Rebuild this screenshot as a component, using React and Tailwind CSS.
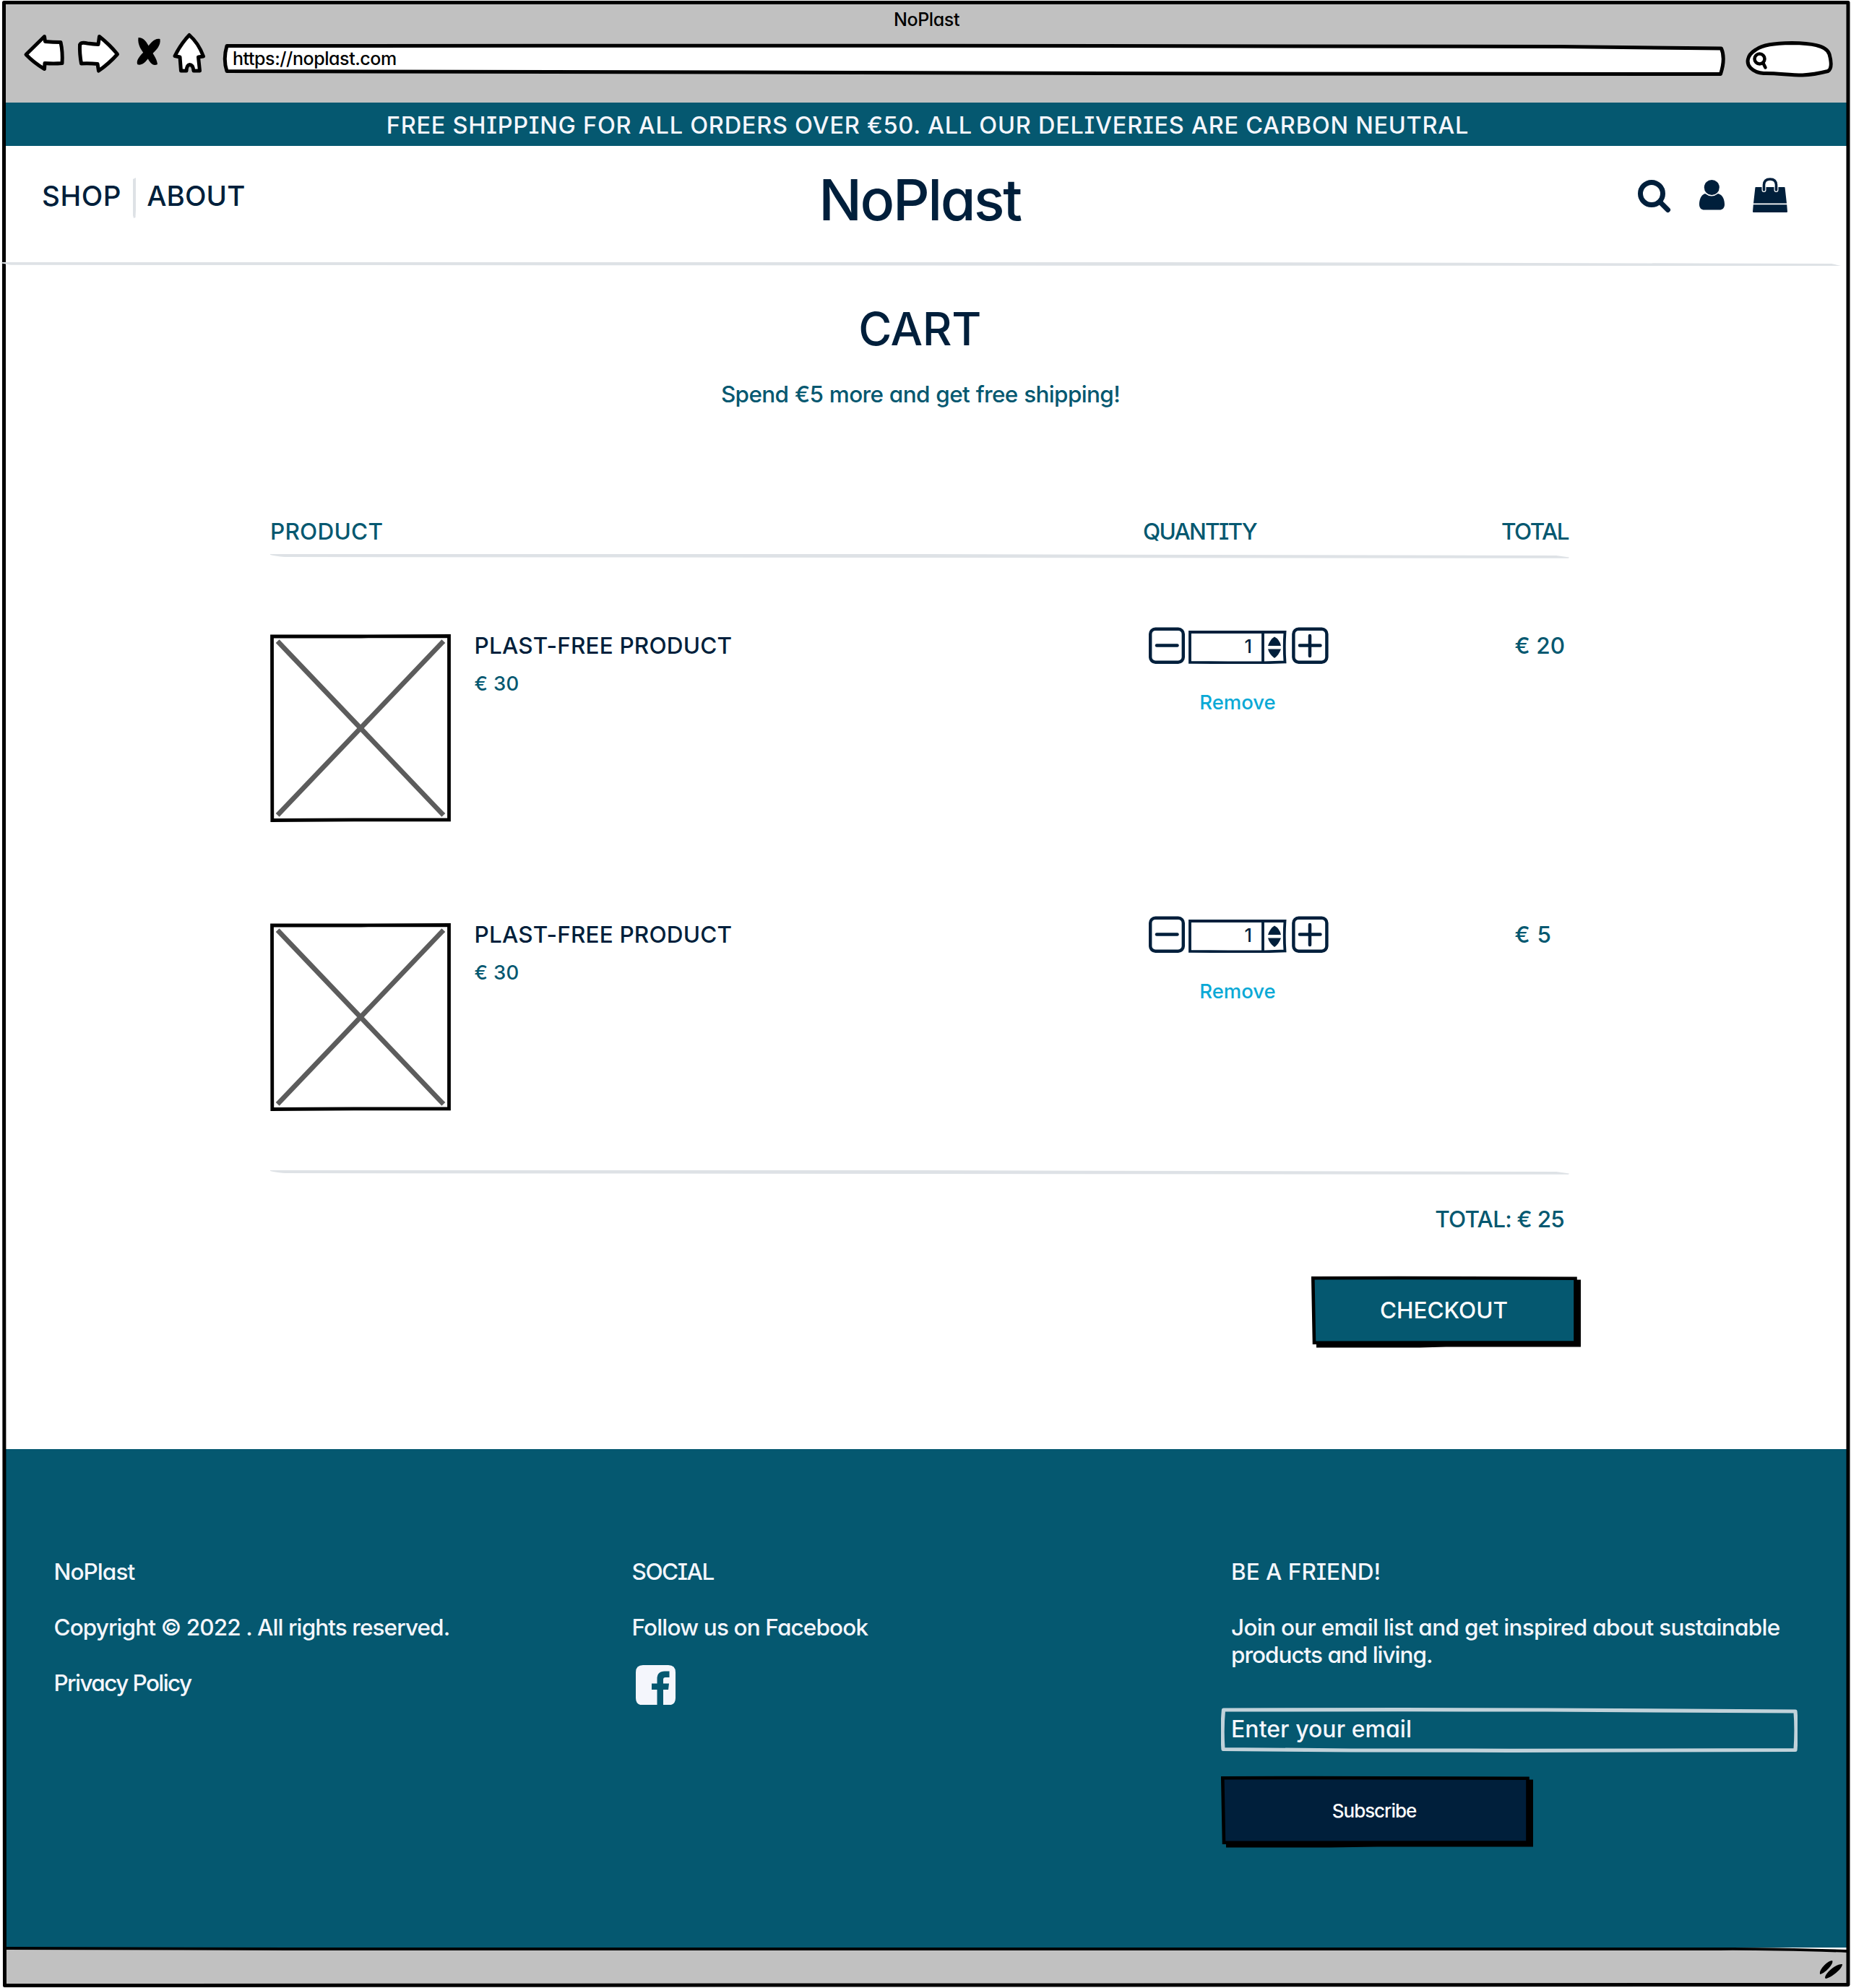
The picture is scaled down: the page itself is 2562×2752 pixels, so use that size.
import React from "react";

const NAVY = "#001f3b";

function T({ className = "", children }) {
  return <span className={"inline-block whitespace-nowrap " + className}>{children}</span>;
}

function Sketch({ box, w, h, className = "", children }) {
  return (
    <svg viewBox={box} width={w} height={h} preserveAspectRatio="none" className={"block shrink-0 " + className}>
      {children}
    </svg>
  );
}

const outline = { fill: "#fff", stroke: "#000", strokeWidth: 5, strokeLinejoin: "round", strokeLinecap: "round" };

function Toolbar() {
  return (
    <div className="h-[142px] bg-[#c1c1c1]">
      <div className="h-[40px] pt-[14px] pl-[3px] text-center text-[25px] leading-[27px] text-black">
        <T className="tracking-[-0.38px]">NoPlast</T>
      </div>
      <div className="flex h-[70px] pl-[30px]">
        <Sketch box="30 40 64 70" w={64} h={70}>
          <path {...outline} d="M61.5 50.5 L36 75.5 Q47 87 61.5 95.5 L62 87.5 Q74 88.5 86 87.5 Q87 72 84 58.5 Q73 58.5 62.5 57.5 Z" />
        </Sketch>
        <Sketch box="104 40 64 70" w={64} h={70} className="ml-[10px]">
          <path {...outline} d="M137.5 50.5 Q152 62 162.5 75 Q151 88 136.5 98 L135 88.5 Q124 87.5 112.5 88 Q110 74 110.5 62 Q112 58 121 60 Q129 61 136 61.5 Z" />
        </Sketch>
        <Sketch box="184 40 44 70" w={44} h={70} className="ml-[16px]">
          <path d="M191.5 52 C199 52 203 58 207 66 C211 74 217 80 218 89 C212 92 208 88 203 78 C196 71 190 62 191.5 52Z" fill="#000" />
          <path d="M221.5 54 C214 52 208 60 203 67 C197 75 188 81 190 89 C197 92 203 84 209 76 C216 70 223 63 221.5 54Z" fill="#000" />
        </Sketch>
        <Sketch box="236 40 52 70" w={52} h={70} className="ml-[8px]">
          <path {...outline} d="M262 48.5 Q275 60 281.5 78 L274.5 79 L276.5 98 L268 98 Q267 89.5 262.5 89.5 Q258.5 90 258 98 L250.5 98 L249 79 L242 77.5 Q250 61 262 48.5 Z" />
        </Sketch>
        <div className="relative ml-[18px] h-[70px] w-[2084px]">
          <Sketch box="306 40 2084 70" w={2084} h={70} className="absolute inset-0">
            <path {...outline} d="M314 63.5 L1300 63.2 L2160 64.5 L2382.5 67 Q2388.5 81 2381.5 102.5 L1640 101.8 L1000 100 L314 98.5 Q308.5 82 314 63.5 Z" />
          </Sketch>
          <div className="relative pt-[24px] pl-[16px] text-[25px] leading-[34px] text-black">
            <T className="tracking-[-0.43px]">https://noplast.com</T>
          </div>
        </div>
        <Sketch box="2414 40 126 70" w={126} h={70} className="ml-[24px]">
          <path {...outline} d="M2441 101.5 C2460 101 2475 104 2495 104 C2508 103.5 2520 101 2530 98.5 C2536 95 2534.5 84 2532 75 C2528 62 2505 60 2480 59.5 C2455 60 2440 62 2430 69 C2417 77 2417 88 2423 94 C2428 99 2433 101 2441 101.5 Z" />
          <circle cx="2435.5" cy="81.5" r="7" fill="none" stroke="#000" strokeWidth="4.5" />
          <path d="M2440.5 87.5 L2443.5 93.5" stroke="#000" strokeWidth="4.5" strokeLinecap="round" />
        </Sketch>
      </div>
    </div>
  );
}

function Header() {
  return (
    <div className="h-[161px] pl-[58px] pr-[88px]">
      <div className="grid h-[138px] grid-cols-[900px_1fr_900px] items-center text-[#001f3b]">
        <div className="flex items-center text-[38.5px] leading-[48px]">
          <T className="tracking-[0.6px]">SHOP</T>
          <Sketch box="184 246 4 56" w={4} h={56} className="mt-[6px] ml-[16px] mr-[15px]">
            <path d="M184 248 L188 246 L188 290 L187.5 301 L185 302 L184 298 Z" fill="#dee2e6" />
          </Sketch>
          <T className="tracking-[0.1px]">ABOUT</T>
        </div>
        <div className="pt-[10px] pl-[14px] text-center text-[79px] leading-[96px]">
          <T className="tracking-[-2.41px]">NoPlast</T>
        </div>
        <div className="flex justify-end">
          <Sketch box="2267 247 46 49" w={46} h={49}>
            <circle cx="2286" cy="268" r="15.5" fill="none" stroke={NAVY} strokeWidth="7" />
            <path d="M2298 280 L2308.5 290.5" stroke={NAVY} strokeWidth="7" strokeLinecap="round" />
          </Sketch>
          <Sketch box="2352 247 35 49" w={35} h={49} className="ml-[39px]">
            <path d="M2360 268 Q2369 275 2378 268 C2385 270 2387 277 2387 283 C2387 288 2384 290.5 2380 290.5 H2359 C2355 290.5 2352 288 2352 283 C2352 277 2354 270 2360 268Z" fill={NAVY} />
            <circle cx="2369.3" cy="259.5" r="10.5" fill={NAVY} />
          </Sketch>
          <Sketch box="2426 246 48 49" w={48} h={49} className="ml-[39px] -mt-[1px]">
            <path d="M2430 259 H2470 Q2470.5 259 2470.6 260 L2473 281.5 H2427 L2429.4 260 Q2429.5 259 2430 259Z M2426.8 283.2 H2473.2 L2474 293 Q2474 294 2473 294 H2427 Q2426 294 2426 293Z" fill={NAVY} />
            <path d="M2441.5 263 V256.5 Q2441.5 248 2450 248 Q2458.5 248 2458.5 256.5 V263" fill="none" stroke="#fff" strokeWidth="6" strokeLinecap="round" />
            <path d="M2441.5 263 V256.5 Q2441.5 248 2450 248 Q2458.5 248 2458.5 256.5 V263" fill="none" stroke={NAVY} strokeWidth="3.6" strokeLinecap="round" />
          </Sketch>
        </div>
      </div>
    </div>
  );
}

function Rule({ className = "" }) {
  return (
    <Sketch box="0 0 1798 8" w={1798} h={8} className={className}>
      <path d="M0 2 L900 2 L1300 3 L1780 4 L1798 6.5 L1797 7.8 L1200 7.2 L500 6.6 L20 6 Q8 5 0 3Z" fill="#dee2e6" />
    </Sketch>
  );
}

function Stepper() {
  return (
    <div className="flex w-[249px] justify-between">
      <Sketch box="1590 868 50 51" w={50} h={51}>
        <rect x="1592.2" y="870.7" width="45.6" height="46" rx="7" fill="none" stroke={NAVY} strokeWidth="4.4" />
        <path d="M1601 893.5 H1629.5" stroke={NAVY} strokeWidth="4.5" strokeLinecap="round" />
      </Sketch>
      <div className="relative -ml-[2px] h-[51px] w-[136px]">
        <Sketch box="1645 868 136 51" w={136} h={51} className="absolute inset-0">
          <path d="M1647 875 H1778.5 Q1777 895 1778.5 916.5 L1750 917.3 L1700 917.3 L1647 916.8 Z M1748 875 V917" fill="none" stroke={NAVY} strokeWidth="3.8" />
          <path d="M1764 881.5 Q1771 885 1773 894 H1755 Q1758 885 1764 881.5Z M1755 898.5 H1773 Q1770 907 1764 911 Q1757 906 1755 898.5Z" fill={NAVY} />
        </Sketch>
        <div className="relative pt-[10px] pr-[48px] text-right text-[25px] leading-[34px] text-[#001f3b]">1</div>
      </div>
      <Sketch box="1788 868 51 51" w={51} h={51}>
        <rect x="1790.4" y="870.7" width="46" height="46" rx="7" fill="none" stroke={NAVY} strokeWidth="4.4" />
        <path d="M1799 893.5 H1827.5 M1813 880 V908" stroke={NAVY} strokeWidth="4.5" strokeLinecap="round" />
      </Sketch>
    </div>
  );
}

function CartRow({ children }) {
  return (
    <div className="grid h-[400px] grid-cols-[284px_932px_487px_95px] pt-[95px]">
      <Sketch box="374 878 251 261" w={251} h={261} className="mt-[10px]">
        <path d="M386.5 890 L611.5 1126 M611.5 890 L386.5 1126" stroke="#5c5c5c" strokeWidth="6.8" strokeLinecap="square" />
        <path d="M376.5 881 L500 881 L621.5 880.5 L621.5 1134.8 L490 1134.8 L376.8 1135.5 Z" fill="none" stroke="#000" strokeWidth="4.8" />
      </Sketch>
      <div className="pt-[6.5px]">
        <div className="-ml-[1.5px] text-[31.5px] leading-[38px] text-[#001f3b]"><T className="tracking-[0.18px]">PLAST-FREE PRODUCT</T></div>
        <div className="mt-[16.5px] -ml-[1.5px] text-[27.5px] leading-[34px] text-[#055870]"><T className="tracking-[0.3px]">€ 30</T></div>
      </div>
      <div>
        <Stepper />
        <div className="mt-[36px] w-[246px] text-center text-[27.5px] leading-[34px] text-[#0aa9d6]"><T>Remove</T></div>
      </div>
      <div className="pt-[6.5px] pl-[19.5px] text-[31.5px] leading-[38px] text-[#055870]">{children}</div>
    </div>
  );
}

function SketchButton({ width, fill, className, children }) {
  return (
    <button className={"relative flex h-[100px] items-center justify-center " + className} style={{ width }}>
      <Sketch box={`0 0 ${width} 100`} w={width} h={100} className="absolute inset-0">
        <path d={`M6 5.5 H${width} V98.5 L${width / 2} 98.5 L150 99.5 H7 Z`} fill="#000" />
        <path d={`M2.3 3.2 L120 3 L${width - 7.5} 3.7 V92.5 L4 92.8 Z`} fill={fill} stroke="#000" strokeWidth="4.6" />
      </Sketch>
      <span className="relative">{children}</span>
    </button>
  );
}

function Main() {
  return (
    <main className="ml-[374px] h-[1638px] w-[1798px]">
      <h1 className="pt-[55px] text-center text-[63px] leading-[64px] text-[#001f3b]"><T className="tracking-[-0.44px]">CART</T></h1>
      <p className="mt-[39.5px] pl-[2px] text-center text-[31.5px] leading-[38px] text-[#055870]">
        <T className="tracking-[-0.65px] [word-spacing:0.8px]">Spend €5 more and get free shipping!</T>
      </p>
      <div className="mt-[152px] grid grid-cols-[1208px_496px_94px] text-[31.5px] leading-[38px] text-[#055870]">
        <div><T className="tracking-[0.25px]">PRODUCT</T></div>
        <div><T className="tracking-[-1.75px]">QUANTITY</T></div>
        <div><T className="tracking-[-1.55px]">TOTAL</T></div>
      </div>
      <Rule className="mt-[10.5px]" />
      <CartRow><T className="tracking-[0.1px]">€ 20</T></CartRow>
      <CartRow><T className="tracking-[0.7px]">€ 5</T></CartRow>
      <Rule className="mt-[44.5px]" />
      <div className="mt-[43px] pr-[7px] text-right text-[31.5px] leading-[38px] text-[#055870]">
        <T className="tracking-[-0.77px]">TOTAL: € 25</T>
      </div>
      <SketchButton width={373} fill="#055870" className="mt-[59.5px] ml-[1441px] pr-[6px] pb-[5px] text-[31.5px] leading-[38px] text-white">
        <T>CHECKOUT</T>
      </SketchButton>
    </main>
  );
}

function Footer() {
  return (
    <footer className="grid h-[690px] grid-cols-[800px_831px_1fr] bg-[#055870] pt-[150.5px] pl-[74.5px] text-[31.5px] leading-[38px] text-[#f4f6fc]">
      <div>
        <div><T className="tracking-[-0.91px]">NoPlast</T></div>
        <div className="mt-[39px]"><T className="tracking-[-0.92px]">Copyright © 2022 . All rights reserved.</T></div>
        <div className="mt-[39px]"><T className="tracking-[-1.6px]">Privacy Policy</T></div>
      </div>
      <div>
        <div><T className="tracking-[-1.44px]">SOCIAL</T></div>
        <div className="mt-[39px]"><T className="tracking-[-0.86px]">Follow us on Facebook</T></div>
        <Sketch box="0 0 55 55.5" w={55} h={55.5} className="mt-[33px] ml-[5px]">
          <path d="M10 0 H45 Q55 0 55 10 V45.5 Q55 55.5 45 55.5 H38 V34 H45 L46 25.5 H38 V20 Q38 17 41 17 H46.5 V8.5 H40 Q29.5 8.5 29.5 19 V25.5 H22 V34 H29.5 V55.5 H10 Q0 55.5 0 45.5 V10 Q0 0 10 0Z" fill="#f4f6fc" />
        </Sketch>
      </div>
      <div className="-ml-[15.5px]">
        <div className="pl-[14px]"><T>BE A FRIEND!</T></div>
        <div className="mt-[39px] pl-[14px]">
          <div><T className="tracking-[-0.69px]">Join our email list and get inspired about sustainable</T></div>
          <div><T className="tracking-[-1.01px]">products and living.</T></div>
        </div>
        <div className="relative mt-[54.5px] h-[62px] w-[798px]">
          <Sketch box="0 0 798 62" w={798} h={62} className="absolute inset-0">
            <path d="M3.5 3 L250 2.7 L450 3 L795 5 Q797 30 795 58.5 L600 59 L400 59.3 L180 59 L3 57.5 Q1 30 3.5 3 Z" fill="none" stroke="#c1d2da" strokeWidth="5.2" strokeLinejoin="round" />
          </Sketch>
          <div className="relative pt-[10.5px] pl-[14px] text-[32px]"><T className="tracking-[0.05px]">Enter your email</T></div>
        </div>
        <SketchButton width={432} fill={NAVY} className="mt-[32px] pr-[8px] pb-[3px] text-[26px] leading-[34px] text-white">
          <T className="tracking-[-1.05px]">Subscribe</T>
        </SketchButton>
      </div>
    </footer>
  );
}

export default function App() {
  return (
    <div className="relative h-[2752px] w-[2562px] overflow-hidden bg-white font-['Inter',sans-serif] font-medium [font-feature-settings:'cv11','cv08']">
      <Toolbar />
      <div className="h-[60px] bg-[#055870] pt-[12px] pl-[6px] text-center text-[32.5px] leading-[40px] text-[#f4f6fc]">
        <T className="tracking-[0.74px]">FREE SHIPPING FOR ALL ORDERS OVER €50. ALL OUR DELIVERIES ARE CARBON NEUTRAL</T>
      </div>
      <Header />
      <Sketch box="0 363 2562 5" w={2562} h={5} className="relative z-10">
        <path d="M2 363 L1600 363 L2350 364.5 L2535 365 L2548 368 L1600 367.7 L15 366.8 L2 364.5 Z" fill="#dee2e6" />
      </Sketch>
      <Main />
      <Footer />
      <div className="h-[56px] bg-[#c1c1c1]" />
      <svg viewBox="0 0 2562 2752" className="pointer-events-none absolute inset-0 h-full w-full">
        <path d="M0 0 H2562 V2752 H0 Z M6 4 V1300 L6.5 2748 H2557 V4 Z" fill="#fff" fillRule="evenodd" />
        <path d="M2455 2696 H2556 V2700 Z" fill="#fff" />
        <path d="M5.5 3.5 H2558 V2747.5 L1200 2748 L6.5 2748.5 L5.5 1500 Z" fill="none" stroke="#000" strokeWidth="5" strokeLinejoin="round" />
        <path d="M6 2697 L400 2698 H2380 Q2450 2697.5 2557 2701" fill="none" stroke="#000" strokeWidth="3.8" />
        <path d="M2519 2732 C2518 2726 2530 2714 2536 2714 C2539 2718 2526 2732 2519 2733Z M2526 2738 C2526 2731 2542 2718 2550 2719 C2550 2726 2534 2738 2527 2739Z" fill="#000" />
      </svg>
    </div>
  );
}
